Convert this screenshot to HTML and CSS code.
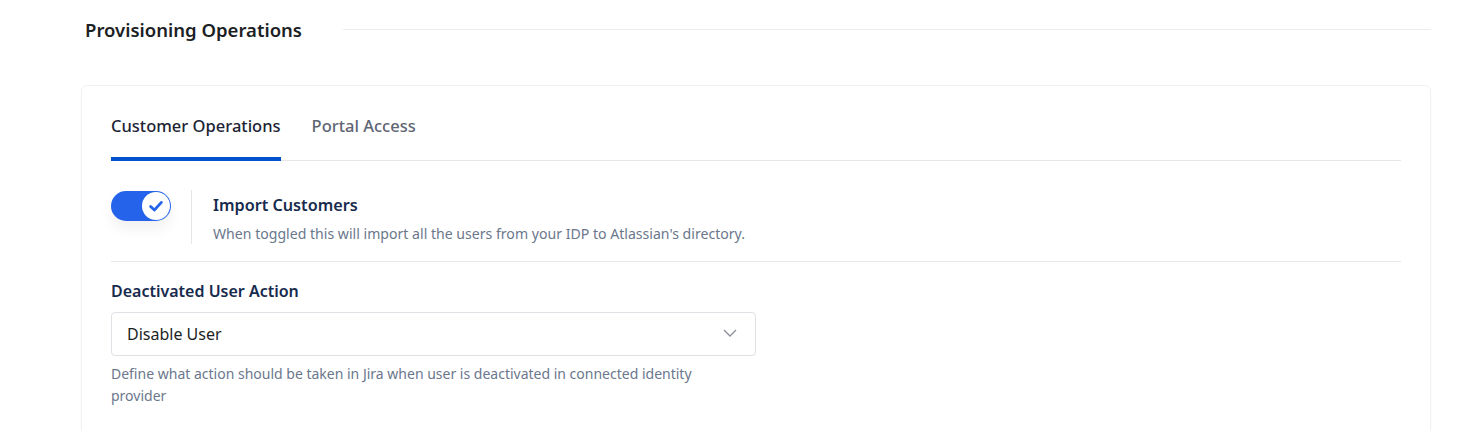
FILE: index.html
```html
<!DOCTYPE html>
<html lang="en">
<head>
<meta charset="utf-8">
<title>Provisioning Operations</title>
<link rel="stylesheet" href="styles.css">
</head>
<body>
<div class="page">
  <div class="section-header">
    <h2 class="section-title">Provisioning Operations</h2>
    <div class="section-rule"></div>
  </div>
  <div class="card">
    <div class="tabs">
      <div class="tab tab-active">Customer Operations</div>
      <div class="tab">Portal Access</div>
    </div>
    <div class="toggle-row">
      <div class="toggle-wrap">
        <div class="toggle">
          <span class="knob">
            <svg width="18" height="18" viewBox="0 0 18 18"><path d="M3.6 9.4 L7.4 13 L14.4 5.4" fill="none" stroke="#2563eb" stroke-width="2.8" stroke-linecap="round" stroke-linejoin="round"/></svg>
          </span>
        </div>
      </div>
      <div class="toggle-text">
        <div class="toggle-title">Import Customers</div>
        <div class="toggle-desc">When toggled this will import all the users from your IDP to Atlassian's directory.</div>
      </div>
    </div>
    <div class="field">
      <div class="field-label">Deactivated User Action</div>
      <div class="select">
        <span class="select-value">Disable User</span>
        <svg class="chevron" width="14" height="8" viewBox="0 0 14 8"><path d="M1 1 L7 7 L13 1" fill="none" stroke="#8a8f98" stroke-width="1.3"/></svg>
      </div>
      <div class="field-help">Define what action should be taken in Jira when user is deactivated in connected identity provider</div>
    </div>
  </div>
</div>
</body>
</html>
```
FILE: styles.css
```css
* { box-sizing: border-box; }
html, body { margin: 0; padding: 0; background: #ffffff; }
body {
  font-family: "Noto Sans", "Open Sans", sans-serif;
  color: #172b4d;
}
.page {
  padding: 0 26px 0 81px;
}
.section-header {
  display: flex;
  align-items: center;
  height: 60px;
  gap: 41px;
}
.section-title {
  margin: 0;
  padding-left: 4px;
  font-size: 18.5px;
  font-weight: 600;
  color: #1c1f24;
  line-height: 24px;
}
.section-rule {
  flex: 1;
  height: 1px;
  background: #ececec;
  margin-top: -2px;
}
.card {
  margin-top: 25px;
  border: 1px solid #f1f1f1;
  border-radius: 6px;
  box-shadow: 0 1px 3px rgba(0,0,0,0.03);
  padding: 0 29px 60px 29px;
  min-height: 400px;
}
.tabs {
  display: flex;
  gap: 31px;
  border-bottom: 1px solid #e4e6ea;
}
.tab {
  padding: 28px 0 19px;
  line-height: 24px;
  font-size: 16.5px;
  font-weight: 500;
  color: #5e6573;
  border-bottom: 4px solid transparent;
  margin-bottom: -1px;
}
.tab-active {
  color: #1c2434;
  border-bottom-color: #0052cc;
}
.toggle-row {
  display: flex;
  align-items: stretch;
  padding: 29px 0 17px;
  border-bottom: 1px solid #e6e8eb;
}
.toggle-wrap {
  padding-right: 20px;
  border-right: 1px solid #e4e6ea;
  margin-right: 21px;
}
.toggle {
  width: 60px;
  height: 30px;
  border-radius: 15px;
  background: #2563eb;
  display: flex;
  align-items: center;
  justify-content: flex-end;
  padding-right: 1px;
  margin-top: 1px;
  box-shadow: 0 8px 14px rgba(0,0,0,0.06);
}
.knob {
  width: 28px;
  height: 28px;
  border-radius: 50%;
  background: #ffffff;
  display: flex;
  align-items: center;
  justify-content: center;
}
.toggle-text {
  display: flex;
  flex-direction: column;
  gap: 7px;
  padding-top: 3px;
}
.toggle-title {
  font-size: 16.2px;
  font-weight: 600;
  line-height: 24px;
  color: #172b4d;
}
.toggle-desc {
  font-size: 14.1px;
  line-height: 20px;
  color: #6b778c;
}
.field {
  padding-top: 17px;
  width: 645px;
}
.field-label {
  font-size: 16px;
  font-weight: 600;
  line-height: 24px;
  color: #172b4d;
}
.select {
  margin-top: 9px;
  height: 44px;
  border: 1px solid #dfe1e6;
  border-radius: 4px;
  display: flex;
  align-items: center;
  justify-content: space-between;
  padding: 0 18px 0 15px;
}
.select-value {
  font-size: 16px;
  color: #1c1f24;
}
.chevron { display: block; margin-top: -2px; }
.field-help {
  margin-top: 7px;
  max-width: 610px;
  font-size: 14px;
  line-height: 22px;
  color: #6b778c;
}
```
